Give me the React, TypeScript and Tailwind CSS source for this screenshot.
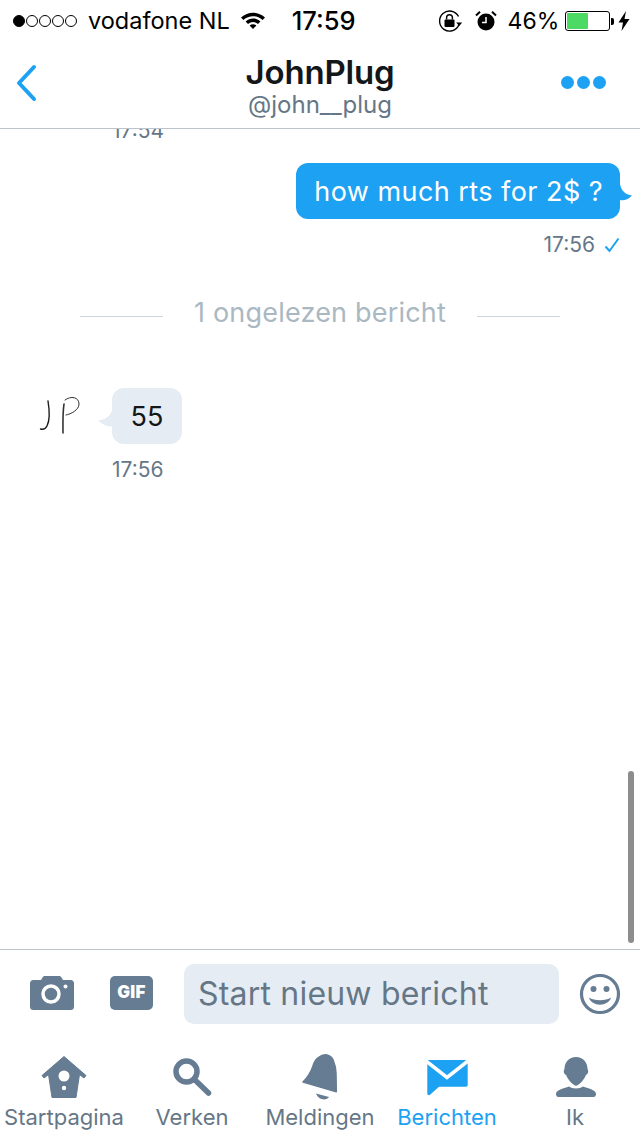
import React from "react";

const font = { fontFamily: "Inter, 'Liberation Sans', sans-serif" };

function Dots() {
  return (
    <div className="flex items-center gap-[1px]">
      <span className="w-[12px] h-[12px] rounded-full bg-black border border-black" />
      {[0, 1, 2, 3].map((i) => (
        <span key={i} className="w-[12px] h-[12px] rounded-full border border-black" />
      ))}
    </div>
  );
}

function StatusBar() {
  return (
    <div className="h-[40px] shrink-0 flex items-center pt-[2px] text-black text-[23.5px] relative">
      <div className="ml-[13px]"><Dots /></div>
      <span className="ml-[11px]">vodafone NL</span>
      <svg width="26" height="20" viewBox="0 0 26 20" className="ml-[10px] -mt-[3px]">
        <path d="M1 7.5C8 1 18 1 25 7.5L22.6 10C17 5 9 5 3.4 10Z" fill="#000" />
        <path d="M5.6 11.5C10 7.6 16 7.6 20.4 11.5L18 14C14.8 11.3 11.2 11.3 8 14Z" fill="#000" />
        <path d="M9.6 15.4C11.6 13.8 14.4 13.8 16.4 15.4L13 19Z" fill="#000" />
      </svg>
      <span className="ml-[26px] text-[25.5px] font-medium">17:59</span>
      <svg width="26" height="24" viewBox="0 0 26 24" className="ml-[82px]">
        <path d="M20.5 7.5A10 10 0 1 0 21 15.5" fill="none" stroke="#000" strokeWidth="1.4" />
        <path d="M18.2 13.5h6l-3 3.6z" fill="#000" />
        <rect x="6.5" y="10.5" width="10" height="7.5" rx="1" fill="#000" />
        <path d="M8.6 10.5V8.6a2.9 2.9 0 0 1 5.8 0v1.9" fill="none" stroke="#000" strokeWidth="1.4" />
      </svg>
      <svg width="22" height="22" viewBox="0 0 22 22" className="ml-[11px]">
        <circle cx="11" cy="12" r="8.5" fill="#000" />
        <path d="M11 7v5.5H7" fill="none" stroke="#fff" strokeWidth="1.5" />
        <path d="M1 5.5 5 1.8M21 5.5 17 1.8" stroke="#000" strokeWidth="2" />
      </svg>
      <span className="ml-[11px] text-[23px]">46%</span>
      <div className="ml-[6px] w-[45px] h-[20px] rounded-[3px] border border-black p-[1px]">
        <div className="w-[21px] h-full bg-[#4cd964] rounded-[1px]" />
      </div>
      <div className="ml-[1px] w-[3px] h-[7px] bg-black rounded-r-[2px]" />
      <svg width="12" height="20" viewBox="0 0 12 20" className="ml-[4px]">
        <path d="M8 0 0.5 11.5H5L3.5 20 11.5 8H6.5Z" fill="#000" />
      </svg>
    </div>
  );
}

function NavBar() {
  return (
    <div className="h-[89px] shrink-0 flex items-start border-b border-[#bcc3ca]">
      <div className="flex-1">
        <svg width="24" height="38" viewBox="0 0 24 38" className="ml-[15px] mt-[24px]">
          <path d="M19 3 4 19l15 16" fill="none" stroke="#1da1f2" strokeWidth="4" strokeLinecap="round" strokeLinejoin="round" />
        </svg>
      </div>
      <div className="flex flex-col items-center mt-[12px]">
        <span className="text-[33px] leading-[40px] font-semibold text-[#14171a] tracking-[-0.2px]">JohnPlug</span>
        <span className="text-[24px] leading-[24px] text-[#657786] mt-[1px]">@john__plug</span>
      </div>
      <div className="flex-1">
        <div className="flex justify-end gap-[3px] mr-[34px] mt-[36px]">
          <span className="w-[13px] h-[13px] rounded-full bg-[#1da1f2]" />
          <span className="w-[13px] h-[13px] rounded-full bg-[#1da1f2]" />
          <span className="w-[13px] h-[13px] rounded-full bg-[#1da1f2]" />
        </div>
      </div>
    </div>
  );
}

function Conversation() {
  return (
    <div className="flex-1 relative overflow-hidden bg-white">
      <div className="-mt-[7px] ml-[112px] h-[18px] text-[21px] leading-[18px] text-[#657786]">17:54</div>
      <div className="flex justify-end mt-[23px] mr-[20px]">
        <div className="relative h-[56px] rounded-[12px] bg-[#1da1f2] text-white text-[27px] tracking-[0.45px] leading-[58px] pl-[18px] pr-[17px] whitespace-nowrap">
          how much rts for 2$ ?
          <svg width="14" height="20" viewBox="0 0 14 20" className="absolute left-full top-[21px]">
            <path d="M0 0C1 6 5 11 12 11.5 8 16 3 17 0 16Z" fill="#1da1f2" />
          </svg>
        </div>
      </div>
      <div className="flex justify-end items-center mr-[20px] mt-[15px] h-[22px] text-[21px] text-[#657786]">
        <span>17:56</span>
        <svg width="16" height="16" viewBox="0 0 16 16" className="ml-[9px]">
          <path d="M1.5 9.5 5.5 14 14.5 1.5" fill="none" stroke="#1da1f2" strokeWidth="2" />
        </svg>
      </div>
      <div className="flex items-center justify-center mt-[40px] h-[40px]">
        <div className="w-[83px] h-px bg-[#ccd6dd]" />
        <span className="text-[27px] tracking-[0.2px] text-[#aab8c2] mx-[31px] pb-[6px] whitespace-nowrap">1 ongelezen bericht</span>
        <div className="w-[83px] h-px bg-[#ccd6dd]" />
      </div>
      <div className="flex items-start mt-[52px] ml-[38px]">
        <svg width="46" height="44" viewBox="0 0 46 44" className="mt-[8px]">
          <path d="M10 5C11.5 14 12 24 9 30 7.5 33 4.5 33.5 2.5 33" fill="none" stroke="#1b1b1b" strokeWidth="1.4" strokeLinecap="round" />
          <path d="M26 8C24.5 18 25 28 25 37" fill="none" stroke="#333" strokeWidth="1.6" strokeLinecap="round" />
          <path d="M27 4C33 -0.5 41 1 41 8 41 14 33 18 28 19" fill="none" stroke="#333" strokeWidth="1" strokeLinecap="round" />
        </svg>
        <div className="relative ml-[28px] w-[70px] h-[56px] rounded-[12px] bg-[#e6ecf3] text-center text-[#14171a] text-[27px] leading-[58px]">
          55
          <svg width="14" height="18" viewBox="0 0 14 18" className="absolute right-full top-[22px]">
            <path d="M14 0C13 5 8 10 0 10.500 5 15 10 17 14 16Z" fill="#e6ecf3" />
          </svg>
        </div>
      </div>
      <div className="ml-[112px] mt-[15px] h-[22px] leading-[22px] text-[21px] text-[#657786]">17:56</div>
      <div className="absolute left-[628px] top-[642px] w-[6px] h-[172px] rounded-full bg-[#8d8d8d]" />
    </div>
  );
}

function Composer() {
  return (
    <div className="h-[91px] shrink-0 border-t border-[#bcc3ca] flex items-start">
      <svg width="44" height="36" viewBox="0 0 44 36" className="ml-[30px] mt-[26px]">
        <path d="M3.500 4H11L13 .8C13.500 .3 14 0 15 0H29c1 0 1.500 .3 2 .8L33 4h7.500A3.500 3.500 0 0 1 44 7.500V30.500A3.500 3.500 0 0 1 40.500 34H3.500A3.500 3.500 0 0 1 0 30.500V7.500A3.500 3.500 0 0 1 3.500 4Z" fill="#657c92" />
        <circle cx="21" cy="18" r="8" fill="none" stroke="#fff" strokeWidth="3.500" />
        <circle cx="35.500" cy="10.500" r="2" fill="#fff" />
      </svg>
      <div className="ml-[36px] mt-[26px] w-[43px] h-[34px] rounded-[5px] bg-[#657c92] flex items-center justify-center text-white text-[17px] font-black tracking-[0.3px]">GIF</div>
      <div className="ml-[31px] mt-[14px] w-[375px] h-[60px] rounded-[10px] bg-[#e6ecf3] pl-[14px] text-[32px] leading-[60px] text-[#657786] tracking-[0.2px]">Start nieuw bericht</div>
      <svg width="42" height="42" viewBox="0 0 42 42" className="ml-[20px] mt-[23px]">
        <circle cx="21" cy="21" r="18.500" fill="none" stroke="#657c92" strokeWidth="3.200" />
        <circle cx="14.500" cy="16" r="3" fill="#657c92" />
        <circle cx="27.500" cy="16" r="3" fill="#657c92" />
        <path d="M10 24.500C15 28 27 28 32 24.500 30 34 12 34 10 24.500Z" fill="#657c92" />
      </svg>
    </div>
  );
}

function Tab({ label, active, icon, w }: { label: string; active?: boolean; icon: React.ReactNode; w: string }) {
  return (
    <div className={`${w} flex flex-col items-center`}>
      <div className="h-[44px] flex items-center justify-center">{icon}</div>
      <span className={`mt-[5px] text-[22px] leading-[26px] whitespace-nowrap ${active ? "text-[#1da1f2]" : "text-[#657786]"}`}>{label}</span>
    </div>
  );
}

function TabBar() {
  const c = "#657c92";
  return (
    <div className="h-[96px] shrink-0 flex items-start pt-[15px]">
      <Tab w="w-[128px]" label="Startpagina" icon={
        <svg width="46" height="42" viewBox="0 0 46 42">
          <path d="M23 0.500 45 19.500 43 22 38.500 18.500 35 41.500H11L7.500 18.500 3 22 1 19.500Z" fill={c} stroke={c} strokeLinejoin="round" />
          <circle cx="23" cy="20" r="5.500" fill="#fff" />
          <circle cx="23" cy="32" r="2.200" fill="#fff" />
        </svg>
      } />
      <Tab w="w-[128px]" label="Verken" icon={
        <svg width="40" height="40" viewBox="0 0 40 40">
          <circle cx="14.500" cy="14.500" r="10.500" fill="none" stroke={c} strokeWidth="5.500" />
          <path d="M23 23 36.500 36" stroke={c} strokeWidth="5.500" strokeLinecap="round" />
        </svg>
      } />
      <Tab w="w-[128px]" label="Meldingen" icon={
        <svg width="38" height="46" viewBox="0 0 38 46">
          <path d="M2 28C6 24 10 18 11.700 12.700 13 8 14.500 5 17.700 3.300 20 1.500 23 .5 26 1 30 2 32 5 32.700 7.700 34.500 12 35 16 35 19.300L35.300 37.700Z" fill={c} stroke={c} strokeWidth="1.500" strokeLinejoin="round" />
          <path d="M15 39.500 28 43C26 46.500 18 47 15 39.500Z" fill={c} />
        </svg>
      } />
      <Tab w="w-[126px]" active label="Berichten" icon={
        <svg width="42" height="38" viewBox="0 0 42 38">
          <path d="M2.500 2H40.500C41.200 2 41.700 2.500 41.700 3.200V27C41.700 28 41 28.700 40 28.700H13L4 36.800C2.800 37.600 1.300 37 1.300 35.500V3.200C1.300 2.500 1.800 2 2.500 2Z" fill="#1da1f2" />
          <path d="M0 3 21 19.500 42 3" fill="none" stroke="#fff" strokeWidth="3.500" />
        </svg>
      } />
      <Tab w="w-[130px]" label="Ik" icon={
        <svg width="42" height="42" viewBox="0 0 42 42">
          <path d="M22 1C29 1 33.500 6 33.500 13 35 15 34 18 32 19 30 24 26 28 22 30 18 28 14 24 12 19 10 18 9 15 10.500 13 10.500 6 15 1 22 1Z" fill={c} />
          <path d="M2 38C2 34.500 7 33 15 30.500 18 33 26 33 29 30.500 37 33 42 34.500 42 38 42 40 41 41 39.500 41H4.500C3 41 2 40 2 38Z" fill={c} />
        </svg>
      } />
    </div>
  );
}

export default function App() {
  return (
    <div className="w-[640px] h-[1136px] bg-white flex flex-col overflow-hidden" style={font}>
      <StatusBar />
      <NavBar />
      <Conversation />
      <Composer />
      <TabBar />
    </div>
  );
}
